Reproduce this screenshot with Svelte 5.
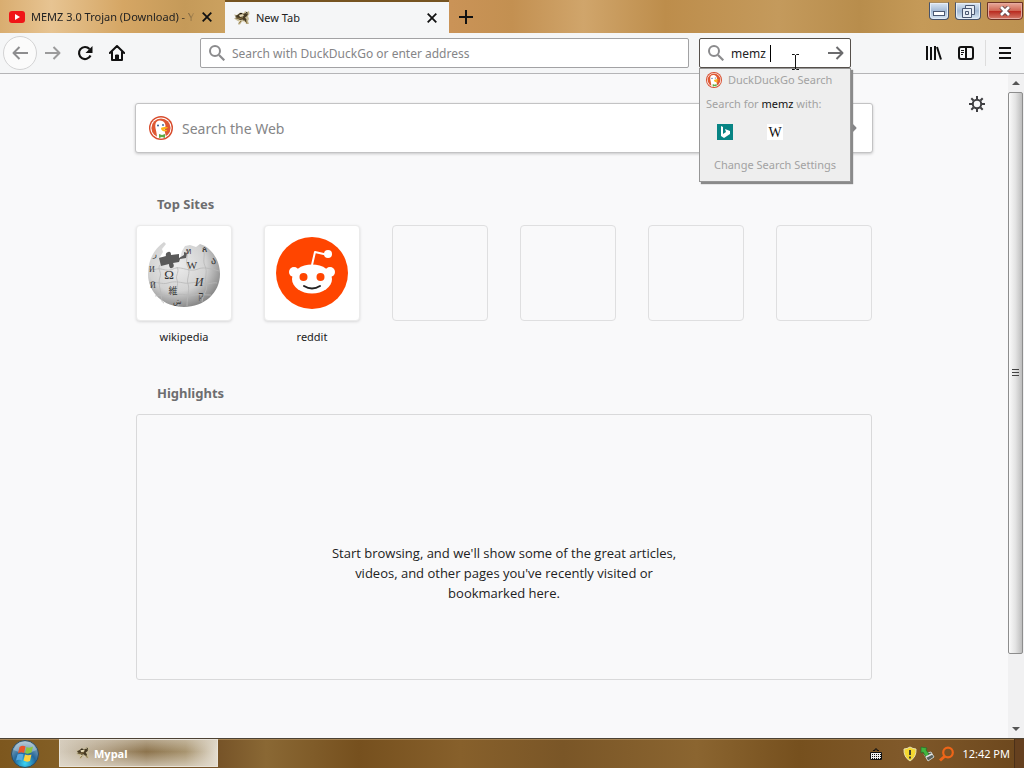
<script>
  let address = ''
  let query = 'memz '
  let webQuery = ''

  const sites = [
    { name: 'wikipedia', icon: 'wikipedia' },
    { name: 'reddit', icon: 'reddit' },
    {}, {}, {}, {},
  ]
</script>

<style>
  :global(body) {
    margin: 0;
    font-family: 'Noto Sans', 'Open Sans', sans-serif;
    font-size: 11px;
    color: #222;
  }

  button,
  input {
    font: inherit;
    color: inherit;
    border: 0;
    padding: 0;
    margin: 0;
    background: none;
    outline: none;
    min-width: 0;
  }

  button {
    display: flex;
    align-items: center;
    justify-content: center;
    flex: none;
  }

  svg {
    display: block;
    flex: none;
  }

  .window {
    display: flex;
    flex-direction: column;
    min-height: 100vh;
    background: #f9f9fa;
  }

  .titlebar {
    display: flex;
    height: 33px;
    background: linear-gradient(90deg, #d9ad70 0, #e7c492 5%, #d5a664 12%, #c59a59 18%, #cba15f 22%, #ca9357 44%, #c39051 50%, #d0a56b 57%, #bd8d4b 65%, #c49a5c 76%, #b88d4c 84%, #c59a58 90%, #bd9251 100%);
  }

  .tab {
    display: flex;
    align-items: center;
    box-sizing: border-box;
    width: 224px;
    padding: 0 12px 0 9px;
    gap: 6px;
  }

  .tab.active {
    border-top: 2px solid #765421;
    background: #f5f6f7;
    margin-left: 1px;
  }

  .tab .title {
    flex: 1;
    overflow: hidden;
    white-space: nowrap;
  }

  .tab:not(.active) .title {
    -webkit-mask-image: linear-gradient(90deg, #000 90%, transparent);
    mask-image: linear-gradient(90deg, #000 90%, transparent);
  }

  .new-tab {
    width: 34px;
  }

  .controls {
    display: flex;
    align-items: flex-start;
    gap: 6px;
    margin-left: auto;
    padding: 2px 1px 0 0;
  }

  .controls button {
    box-sizing: border-box;
    width: 26px;
    height: 18px;
    border: 1px solid #46536b;
    border-top-color: #a98c60;
    border-radius: 0 0 4px 4px;
    background: linear-gradient(#dbe6f3, #a3b9d4 50%, #d8e7f4);
    box-shadow: inset 0 0 0 1px #e5edf7;
  }

  .controls button:first-child {
    width: 20px;
  }

  .controls .close {
    width: 36px;
    border-color: #6c3325;
    background: linear-gradient(#e8aa9a, #d06755 48%, #b92b20 52%, #d57c6a);
    box-shadow: inset 0 0 0 1px #e6aaa0;
  }

  .toolbar {
    display: flex;
    align-items: center;
    height: 40px;
    padding-right: 3px;
    background: #f5f6f7;
    border-bottom: 1px solid #b5b5b7;
  }

  .toolbar .tool {
    width: 32px;
    height: 32px;
  }

  .toolbar .back {
    box-sizing: border-box;
    width: 34px;
    height: 34px;
    margin: 0 0 0 3px;
    border: 1px solid #d3d3d4;
    border-radius: 50%;
    background: #fbfbfb;
  }

  .spring {
    flex: none;
    width: 67px;
  }

  .field {
    display: flex;
    align-items: center;
    box-sizing: border-box;
    height: 30px;
    padding: 0 6px 0 8px;
    gap: 7px;
    border: 1px solid #a2a2a4;
    border-radius: 2px;
    background: #fff;
    font-size: 12px;
  }

  .field input {
    flex: 1;
    width: 0;
    line-height: 18px;
    padding-top: 2px;
  }

  .field input::placeholder,
  .web-search input::placeholder {
    color: #858587;
    opacity: 1;
  }

  .address {
    flex: 1;
    min-width: 0;
  }

  .search {
    position: relative;
    width: 152px;
    margin: 0 0 0 10px;
    border-color: #55504b;
  }

  .caret {
    position: absolute;
    left: 70px;
    top: 6px;
    width: 1px;
    height: 17px;
    background: #000;
  }

  .pointer {
    position: absolute;
    left: 91px;
    top: 15px;
    z-index: 3;
    pointer-events: none;
  }

  .popup {
    position: absolute;
    left: -1px;
    top: 29px;
    z-index: 2;
    box-sizing: border-box;
    width: 152px;
    padding: 0 6px 6px;
    border: 1px solid #969696;
    background: #eee;
    box-shadow: 2px 2px 1px #8a8a8a;
    color: #a2a2a2;
    font-size: 11px;
    line-height: 20px;
    white-space: nowrap;
  }

  .popup .engine {
    display: flex;
    align-items: center;
    height: 22px;
    gap: 6px;
  }

  .popup .for {
    height: 26px;
    line-height: 26px;
  }

  .popup b {
    font-weight: 400;
    color: #111;
  }

  .popup .engines {
    display: flex;
    height: 30px;
    padding-left: 4px;
    gap: 20px;
  }

  .popup .engines button {
    width: 30px;
  }

  .popup .settings {
    width: 100%;
    padding-top: 8px;
  }

  .divider {
    width: 1px;
    height: 26px;
    margin: 0 3px;
    background: #ddd;
  }

  .body {
    display: flex;
    flex: 1;
  }

  .page {
    position: relative;
    flex: 1;
    box-sizing: border-box;
    padding: 29px 32px 32px;
  }

  .prefs {
    position: absolute;
    top: 22px;
    right: 23px;
  }

  .content {
    max-width: 736px;
    margin: 0 auto;
  }

  .web-search {
    display: flex;
    align-items: center;
    box-sizing: border-box;
    height: 50px;
    margin: 0 -1px;
    padding: 0 15px 0 13px;
    gap: 9px;
    border: 1px solid #c3c3c4;
    border-radius: 3px;
    background: #fff;
    box-shadow: 0 1px 3px #0003;
    font-size: 14px;
  }

  .web-search input {
    flex: 1;
  }

  h2 {
    margin: 0;
    padding: 0 21px 11px;
    font-size: 13px;
    line-height: 20px;
    font-weight: 700;
    color: #6d6d6f;
  }

  .section {
    margin-top: 36px;
  }

  .web-search + .section {
    margin-top: 41px;
  }

  .tiles {
    display: grid;
    grid-template-columns: repeat(6, 96px);
    justify-content: space-between;
    height: 122px;
    line-height: 20px;
    text-align: center;
  }

  .tiles a {
    color: inherit;
    text-decoration: none;
  }

  .tile {
    display: flex;
    align-items: center;
    justify-content: center;
    box-sizing: border-box;
    height: 96px;
    margin-bottom: 6px;
    border: 1px solid #dfdfe0;
    border-radius: 4px;
  }

  .tile.filled {
    border-color: #ebebeb;
    background: #fff;
    box-shadow: 0 1px 3px #0002;
  }

  .empty {
    box-sizing: border-box;
    height: 266px;
    padding: 128px 190px 0;
    border: 1px solid #d9d9da;
    border-radius: 3px;
    text-align: center;
    font-family: 'Open Sans', 'Noto Sans', sans-serif;
    font-size: 13px;
    line-height: 20px;
  }

  .empty p {
    margin: 0;
  }

  .scrollbar {
    display: flex;
    flex-direction: column;
    width: 16px;
    background: #f1f1f2;
  }

  .scrollbar button {
    height: 18px;
  }

  .thumb {
    display: flex;
    align-items: center;
    justify-content: center;
    box-sizing: border-box;
    height: 562px;
    margin: 0 1px 0 0;
    border: 1px solid #8d8d8d;
    border-radius: 2px;
    background: linear-gradient(90deg, #fafafa, #e3e3e3 50%, #bdbdbd);
  }

  .scrollbar .down {
    margin-top: auto;
  }

  .taskbar {
    display: flex;
    align-items: stretch;
    height: 29px;
    border-top: 1px solid #4c4234;
    box-shadow: inset 0 1px 0 #a58251;
    background: linear-gradient(90deg, #7d571e 0, #846027 7%, #755227 21%, #8a6834 26%, #76501e 35%, #87602b 45%, #7a5627 55%, #8b6530 68%, #76501e 78%, #80592a 88%, #6c471d 100%);
    color: #fff;
  }

  .start {
    width: 50px;
  }

  .task {
    box-sizing: border-box;
    width: 159px;
    margin: 0 0 1px 9px;
    padding-left: 16px;
    gap: 4px;
    justify-content: flex-start;
    border: 1px solid #e9e3d8;
    background: linear-gradient(#d8cfbf88, transparent 45%, #e3dccfaa), linear-gradient(90deg, #d4cbbb, #af9d81 30%, #8c734c 55%, #a8946f 80%, #e3dccf);
    font-family: 'Open Sans', 'Noto Sans', sans-serif;
    font-weight: 700;
  }

  .tray {
    display: flex;
    align-items: center;
    gap: 3px;
    margin-left: auto;
  }

  .tray .keyboard {
    margin-right: 18px;
  }

  .tray time {
    margin: 0 1px 0 4px;
  }

  .show-desktop {
    align-self: stretch;
    width: 9px;
    border-left: 1px solid #4b3019;
    background: #65401f;
  }
</style>

{#snippet duck(size)}
  <svg width={size} height={size} viewBox="0 0 24 24" aria-hidden="true">
    <circle cx="12" cy="12" r="12" fill="#d84c2d" />
    <circle cx="12" cy="12" r="10.6" fill="#fff" />
    <circle cx="12" cy="12" r="9.6" fill="#df5833" />
    <path d="M8 21.500C8 16 5.500 11 6.500 8c.4-2.500 2.500-3.700 4.500-3.500 3.500.2 5.500 2.500 5.500 5.500l-1 4 1.500 7c-2 1.500-6.500 1.700-9 .5z" fill="#fff" />
    <circle cx="9" cy="9.500" r="1" fill="#315b91" />
    <circle cx="14" cy="9" r=".9" fill="#315b91" />
    <path d="M12 12c2-1.200 6-1.400 7-.4-.7 1.500-3.500 1.200-4.500 2 1.500.5 3 .3 3.800.9-1.700 1.600-6.500 1-6.300-2.500z" fill="#fdb515" />
    <path d="M10 18l3 1 3-1v4l-3-1-3 1z" fill="#60a943" />
  </svg>
{/snippet}

{#snippet mypal(size)}
  <svg width={size} height={size} viewBox="0 0 16 16" aria-hidden="true">
    <path d="M0 4.500l3 .5 3-2.500 4 .5 1-2 2 1 2-1 .5 3-1.500 2 1 3-1 2 1 3h-3l-1-3-3 .5-2 3H4l1-3-2-1-3-2 2-1z" fill="#c5b994" />
    <path d="M1 6q3-1 5-3l4 1 1-1 3 1-1 2-2 1.500 1.500 2L12 12h-1.500L9 9.500 6 10l-2-1-3-1 2-.7z" fill="#463a24" />
    <path d="M5 5l3-1 2 1-1 1.500L6 7zM4.500 9.500l2 1-1 2zm5.500.5l1.500 2-2 .5z" fill="#e4d8b3" />
    <path d="M3 8l3 .5 3-1M7 11l-2 2.500M12 11l1 2.500" fill="none" stroke="#8a7444" />
    <path d="M12.500 2l.7 1.500M6 3.500l2 .2" stroke="#17120b" />
  </svg>
{/snippet}

{#snippet cross()}
  <svg width="10" height="10" viewBox="0 0 10 10"><path d="M.7.7l8.600 8.600m0-8.600L.7 9.300" fill="none" stroke="#111" stroke-width="1.800" /></svg>
{/snippet}

{#snippet magnifier()}
  <svg width="16" height="16" viewBox="0 0 16 16" aria-hidden="true"><path d="M10 10l5.300 5.300" stroke="#8b8b8d" stroke-width="2.200" /><circle cx="6" cy="6" r="5" fill="none" stroke="#8b8b8d" stroke-width="2" /></svg>
{/snippet}

{#snippet arrow(color)}
  <svg width="16" height="14" viewBox="0 0 16 14"><path d="M0 7h14.500M8.500 1l6 6-6 6" fill="none" stroke={color} stroke-width="2" stroke-linejoin="round" /></svg>
{/snippet}

{#snippet siteIcon(icon)}
  {#if icon === 'wikipedia'}
    <svg width="76" height="76" viewBox="0 0 76 76" aria-hidden="true">
      <defs>
        <radialGradient id="globe" cx=".4" cy=".35" r=".68">
          <stop offset="0" stop-color="#ededed" />
          <stop offset=".6" stop-color="#d2d2d2" />
          <stop offset="1" stop-color="#858585" />
        </radialGradient>
      </defs>
      <path d="M18 7l2 2-4 5 1 3-3 5 20 1 2-7 3-5 5-1 6 2 4-3 5 2c9 6 15 16 15 28 0 19-16 33-36 33S2 58 2 39C2 25 8 14 18 7z" fill="url(#globe)" />
      <g fill="none" stroke="#b8b8b8" stroke-width=".8">
        <path d="M3 34c4 2 8-1 12 0s8 2 12 0 8-1 12 0 8 2 13 0 11-1 21 2M3 48c8-2 13 2 19 0s11-1 16 0 13-2 19 0 10-1 14 0M9 61c8-2 14 1 20-1s15 1 19 0 11 0 17 0" />
        <path d="M14 30c-3 4 2 7 0 12s0 12 1 17 0 8 3 9M31 32c3 5-2 8 0 13s-2 10 0 16 0 8 2 11M41 16c1 7-2 10 1 16s-2 12 0 17-1 12-1 22M57 14c3 7-1 11 2 17s-1 13 1 19-3 8-4 17" />
      </g>
      <path d="M13 23l7-2q-1-3 2-4t3 3l8-1v4l5-3v-3l3 1-1 5-6 1-1 3-6 1q2 4-1 5t-3-4l-8 2z" fill="#5a5a5a" />
      <g fill="#333" font-family="Liberation Serif, serif" text-anchor="middle">
        <text x="23" y="44" font-size="13">Ω</text>
        <text x="46" y="34" font-size="11">W</text>
        <text x="53" y="51" font-size="12" font-style="italic">И</text>
        <text x="27" y="59" font-size="9" font-family="Noto Sans CJK JP, sans-serif">維</text>
        <text x="67" y="29" font-size="10">ა</text>
        <text x="42" y="19" font-size="8">ท</text>
        <text x="58" y="17" font-size="9">ጰ</text>
        <text x="55" y="64" font-size="10">ק</text>
        <text x="6" y="37" font-size="8">И</text>
        <text x="7" y="53" font-size="8">Й</text>
        <text x="9" y="22" font-size="8">ر</text>
        <text x="31" y="69" font-size="7">ش</text>
      </g>
    </svg>
  {:else}
    <svg width="72" height="72" viewBox="0 0 72 72" aria-hidden="true">
      <circle cx="36" cy="36" r="36" fill="#ff4500" />
      <path d="M36 28l3-13 13 3" fill="none" stroke="#fff" stroke-width="2" stroke-linejoin="round" />
      <g fill="#fff">
        <circle cx="52" cy="17" r="4" />
        <circle cx="18" cy="35" r="5" />
        <circle cx="54" cy="35" r="5" />
        <ellipse cx="36" cy="42" rx="20" ry="14.500" />
      </g>
      <circle cx="27.500" cy="40" r="4" fill="#ff4500" />
      <circle cx="44.500" cy="40" r="4" fill="#ff4500" />
      <path d="M28 49q8 5 16 0" fill="none" stroke="#222" stroke-width="2" stroke-linecap="round" />
    </svg>
  {/if}
{/snippet}

<div class="window">
  <header class="titlebar">
    <div class="tab">
      <svg width="16" height="12" viewBox="0 0 16 12" aria-hidden="true"><rect width="16" height="12" rx="3" fill="#f01517" /><path d="M6 3l5 3-5 3z" fill="#fff" /></svg>
      <span class="title">MEMZ 3.0 Trojan (Download) - Y</span>
      <button aria-label="Close tab">{@render cross()}</button>
    </div>
    <div class="tab active">
      {@render mypal(16)}
      <span class="title">New Tab</span>
      <button aria-label="Close tab">{@render cross()}</button>
    </div>
    <button class="new-tab" aria-label="Open a new tab">
      <svg width="14" height="14" viewBox="0 0 14 14"><path d="M7 0v14M0 7h14" stroke="#111" stroke-width="2" /></svg>
    </button>
    <div class="controls">
      <button aria-label="Minimize"><svg width="14" height="10" viewBox="0 0 14 10"><rect x="1.500" y="5.500" width="11" height="4" fill="#fff" stroke="#4b5872" /></svg></button>
      <button aria-label="Restore"><svg width="13" height="13" viewBox="0 0 13 13"><g fill="#e7edf5" stroke="#4b5872"><path d="M3.500.5h9v9h-9z" /><path d="M.5 3.500h9v9h-9z" /><path d="M3.500 6.500h3v3h-3z" /></g></svg></button>
      <button class="close" aria-label="Close"><svg width="12" height="10" viewBox="0 0 12 10"><path d="M2 1l8 8m0-8L2 9" stroke="#61484a" stroke-width="4.500" /><path d="M2 1l8 8m0-8L2 9" stroke="#fff" stroke-width="2.600" /></svg></button>
    </div>
  </header>

  <nav class="toolbar">
    <button class="back" aria-label="Back"><svg width="16" height="14" viewBox="0 0 16 14"><path d="M16 7H1.500m6-6l-6 6 6 6" fill="none" stroke="#8d8d8f" stroke-width="2" stroke-linejoin="round" /></svg></button>
    <button class="tool" aria-label="Forward">{@render arrow('#9b9b9c')}</button>
    <button class="tool" aria-label="Reload">
      <svg width="16" height="16" viewBox="0 0 16 16"><path d="M13.500 10.500A6 6 0 1 1 12.500 4" fill="none" stroke="#111" stroke-width="2.200" /><path d="M15.500 1v7H8.500z" fill="#111" /></svg>
    </button>
    <button class="tool" aria-label="Home">
      <svg width="16" height="16" viewBox="0 0 16 16"><path d="M.8 8L8 1l7.200 7M3 7v8h10V7" fill="none" stroke="#111" stroke-width="2" stroke-linejoin="round" stroke-linecap="round" /><path d="M6.500 15v-5h3v5z" fill="#111" stroke="#111" /></svg>
    </button>
    <div class="spring"></div>
    <label class="field address">
      {@render magnifier()}
      <input type="text" aria-label="Address" placeholder="Search with DuckDuckGo or enter address" bind:value={address} />
    </label>
    <div class="field search">
      {@render magnifier()}
      <input type="text" aria-label="Search" bind:value={query} />
      <span class="caret"></span>
      <button aria-label="Submit search">{@render arrow('#6b6b6d')}</button>
      <div class="popup">
        <div class="engine">{@render duck(16)} DuckDuckGo Search</div>
        <div class="for">Search for <b>{query}</b> with:</div>
        <div class="engines">
          <button aria-label="Bing"><svg width="16" height="16" viewBox="0 0 16 16"><path fill="#078484" d="M0 0h16v16H0z" /><path d="M4 2l2 1v7l3-2-1-3 5 2v3l-6 4-3-2z" fill="#fff" /></svg></button>
          <button aria-label="Wikipedia"><svg width="16" height="16" viewBox="0 0 16 16"><path fill="#fff" d="M0 0h16v16H0z" /><text x="8" y="13" text-anchor="middle" font-family="Liberation Serif, serif" font-size="14" fill="#111">W</text></svg></button>
        </div>
        <button class="settings">Change Search Settings</button>
      </div>
      <svg class="pointer" width="9" height="16" viewBox="0 0 9 16" aria-hidden="true"><path d="M1 .5h2.500l1 1 1-1H8M4.500 1v14M1 15.500h2.500l1-1 1 1H8" fill="none" stroke="#111" /></svg>
    </div>
    <div class="spring"></div>
    <button class="tool" aria-label="Library">
      <svg width="16" height="14" viewBox="0 0 16 14"><path d="M1 0v14M5 1v13M9 0v14M11 1l4 12.500" stroke="#111" stroke-width="2" /></svg>
    </button>
    <button class="tool" aria-label="Sidebars">
      <svg width="16" height="14" viewBox="0 0 16 14"><rect x="1" y="1" width="14" height="12" rx="2" fill="none" stroke="#111" stroke-width="2" /><path d="M8 1v12" stroke="#111" stroke-width="2" /><path d="M3 4.500h3M3 6.500h3M3 8.500h2" stroke="#111" /></svg>
    </button>
    <span class="divider"></span>
    <button class="tool" aria-label="Menu">
      <svg width="12" height="12" viewBox="0 0 12 12"><path d="M0 1h12M0 6h12M0 11h12" stroke="#111" stroke-width="2" /></svg>
    </button>
  </nav>

  <div class="body">
    <main class="page">
      <button class="prefs" aria-label="Customize this page">
        <svg width="16" height="16" viewBox="0 0 16 16"><circle cx="8" cy="8" r="4.200" fill="none" stroke="#3f3f42" stroke-width="2" /><path d="M8 0v3M8 13v3M0 8h3M13 8h3M2.300 2.300l2.200 2.200M11.500 11.500l2.200 2.200M2.300 13.700l2.200-2.200M11.500 4.500l2.200-2.200" stroke="#3f3f42" stroke-width="2" /></svg>
      </button>
      <div class="content">
        <div class="web-search">
          {@render duck(24)}
          <input type="text" aria-label="Search the Web" placeholder="Search the Web" bind:value={webQuery} />
          <button aria-label="Search">{@render arrow('#858587')}</button>
        </div>

        <section class="section">
          <h2>Top Sites</h2>
          <div class="tiles">
            {#each sites as site}
              {#if site.name}
                <a href="#{site.name}">
                  <div class="tile filled">{@render siteIcon(site.icon)}</div>
                  {site.name}
                </a>
              {:else}
                <div class="tile"></div>
              {/if}
            {/each}
          </div>
        </section>

        <section class="section">
          <h2>Highlights</h2>
          <div class="empty">
            <p>Start browsing, and we'll show some of the great articles, videos, and other pages you've recently visited or bookmarked here.</p>
          </div>
        </section>
      </div>
    </main>

    <div class="scrollbar">
      <button aria-label="Scroll up"><svg width="8" height="4" viewBox="0 0 8 4"><path d="M0 4l4-4 4 4z" fill="#555" /></svg></button>
      <div class="thumb"><svg width="7" height="8" viewBox="0 0 7 8"><path d="M0 .5h7M0 3.500h7M0 6.500h7" stroke="#444" /></svg></div>
      <button class="down" aria-label="Scroll down"><svg width="8" height="4" viewBox="0 0 8 4"><path d="M0 0l4 4 4-4z" fill="#555" /></svg></button>
    </div>
  </div>

  <footer class="taskbar">
    <button class="start" aria-label="Start">
      <svg width="28" height="28" viewBox="0 0 28 28">
        <defs><radialGradient id="orb" cx=".5" cy=".85" r=".8"><stop stop-color="#39d5f4" /><stop offset=".5" stop-color="#24679b" /><stop offset="1" stop-color="#92afbf" /></radialGradient></defs>
        <circle cx="14" cy="14" r="13.500" fill="url(#orb)" stroke="#2d4c60" />
        <path d="M2.500 10a12 12 0 0 1 23 0q-11 6-23 0z" fill="#fff" opacity=".3" />
        <path d="M8.500 7q3-2 6-.5L13 13q-3-1.500-6 .5z" fill="#e9552a" />
        <path d="M15.500 7q3 1.500 6.500-.5l-1.500 6q-3.500 2-6.500.5z" fill="#8bc540" />
        <path d="M6.500 14.500q3-1.500 6-.3L11 20.500q-3-1.500-6 0z" fill="#58a9e0" />
        <path d="M14 14.500q3 1.500 6.500 0L19 21q-3.500 1.500-6.500-.5z" fill="#ffd13c" />
      </svg>
    </button>
    <button class="task">{@render mypal(14)} Mypal</button>
    <div class="tray">
      <svg class="keyboard" width="12" height="12" viewBox="0 0 12 12" aria-hidden="true"><path d="M3 2.500h2V1h2v1.500h2" fill="none" stroke="#111" /><path fill="#eee" stroke="#111" d="M.5 4.500h11v7H.5z" /><path d="M2 6.500h9M2 8.500h9M2 10.500h9" stroke="#111" stroke-dasharray="1 1" /></svg>
      <svg width="14" height="16" viewBox="0 0 14 16" aria-hidden="true"><path d="M7 1q3 2 6 2 .5 8-6 12Q.5 11 1 3q3 0 6-2z" fill="#f5d82f" stroke="#e9e3b0" /><path d="M7 4v5M7 10.500v2" stroke="#333" stroke-width="1.800" /></svg>
      <svg width="16" height="16" viewBox="0 0 16 16" aria-hidden="true"><path d="M4 8l7-2 3 5-6 4z" fill="#59605b" stroke="#c9cec9" /><path d="M1 1l6 1-1 2 3 4-3 3-3-5-2 1z" fill="#42b63e" stroke="#25682a" stroke-width=".7" /><path d="M6 11l6-3" stroke="#e5e5e5" stroke-width="1.500" /></svg>
      <svg width="16" height="16" viewBox="0 0 16 16" aria-hidden="true"><circle cx="9" cy="6.500" r="4.800" fill="none" stroke="#ee6518" stroke-width="2.200" /><path d="M6 10l-5 4.500" stroke="#ee6518" stroke-width="3" /></svg>
      <time>12:42 PM</time>
      <span class="show-desktop"></span>
    </div>
  </footer>
</div>
